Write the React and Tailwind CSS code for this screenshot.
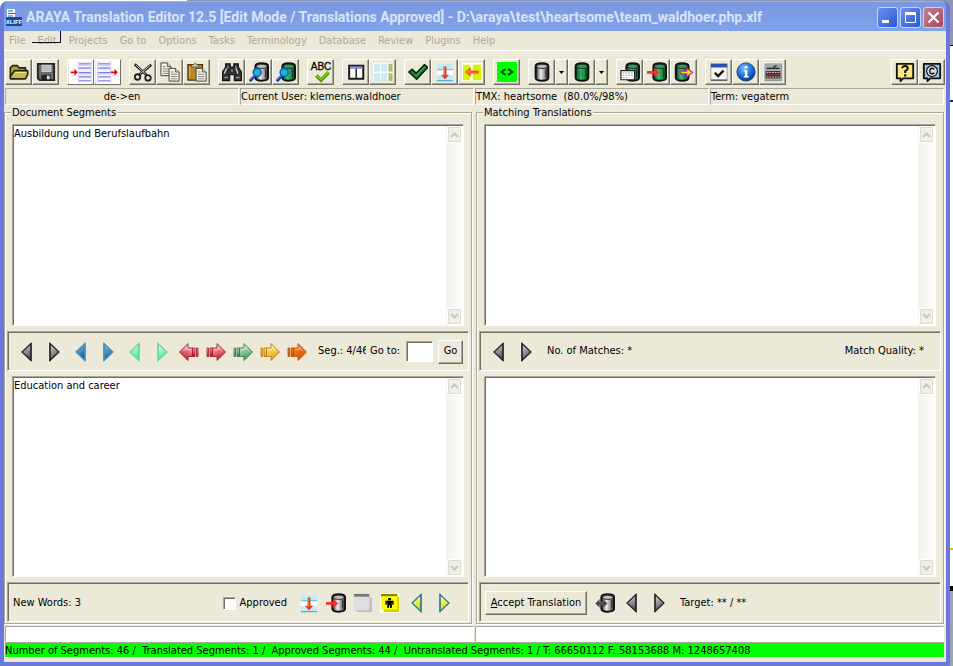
const MENUS = ['File', 'Edit', 'Projects', 'Go to', 'Options', 'Tasks', 'Terminology', 'Database', 'Review', 'Plugins', 'Help']

const SUNKEN = 'border border-t-[#aca899] border-l-[#aca899] border-b-white border-r-white'
const DEEP = 'border border-t-[#aca899] border-l-[#aca899] border-b-white border-r-white shadow-[inset_1px_1px_0_#716f64]'
const RAISED = 'border border-t-white border-l-white border-b-[#716f64] border-r-[#716f64] shadow-[inset_-1px_-1px_0_#aca899]'

function Svg({ children, size = 20 }) {
  return (
    <svg width={size} height={size} viewBox="0 0 22 22" className="shrink-0" aria-hidden="true">
      {children}
    </svg>
  )
}

function Gradients() {
  const list = [
    ['metal', '#3a3a3a', '#f0f0f0', '#484848'],
    ['leaf', '#06582a', '#3cc070', '#075c2b'],
  ]
  const down = [
    ['blue', '#8ec4e2', '#1c5f92'],
    ['mint', '#fdfdb8', '#3fee9a'],
    ['lemon', '#ffffd0', '#e0d800'],
    ['red', '#ffe0e0', '#c8182c'],
    ['green', '#eaf5e6', '#3f9a55'],
    ['gold', '#fff6c8', '#e8a400'],
    ['orange', '#f08a30', '#d85a00'],
    ['grey', '#e4e4e4', '#505050'],
  ]
  return (
    <svg width="0" height="0" className="absolute" aria-hidden="true">
      <defs>
        {list.map(([id, a, b, c]) => (
          <linearGradient key={id} id={id} x1="0" x2="1" y1="0" y2="0">
            <stop offset="0.05" stopColor={a} />
            <stop offset="0.4" stopColor={b} />
            <stop offset="0.95" stopColor={c} />
          </linearGradient>
        ))}
        {down.map(([id, a, b]) => (
          <linearGradient key={id} id={id} x1="0" x2="0.3" y1="0" y2="1">
            <stop offset="0" stopColor={a} />
            <stop offset="1" stopColor={b} />
          </linearGradient>
        ))}
        <radialGradient id="globe" cx="0.4" cy="0.3" r="0.7">
          <stop offset="0" stopColor="#7cc4ff" />
          <stop offset="0.6" stopColor="#1a6fe0" />
          <stop offset="1" stopColor="#0a3a90" />
        </radialGradient>
      </defs>
    </svg>
  )
}

function Can({ fill = 'metal', x = 0 }) {
  return (
    <g transform={`translate(${x} 0)`}>
      <path d="M4 5 Q4 1.5 11 1.5 Q18 1.5 18 5 V17 Q18 20.5 11 20.5 Q4 20.5 4 17Z" fill={`url(#${fill})`} stroke="#111" strokeWidth="2.2" />
      <ellipse cx="11" cy="4.8" rx="6" ry="2.3" fill={fill === 'leaf' ? '#2f9e5a' : '#bcbcbc'} stroke="#222" strokeWidth="1" />
      <path d="M15.5 8V17" stroke={fill === 'leaf' ? '#04451f' : '#333'} strokeWidth="1.6" />
    </g>
  )
}

function Lens() {
  return (
    <>
      <path d="M1 21 L6 15.5" stroke="#0a2a9a" strokeWidth="3" />
      <path d="M1.5 20 L6 15" stroke="#3f8cf0" strokeWidth="1.1" />
      <circle cx="9" cy="11.5" r="4.4" fill="#20b4cc" stroke="#1060c8" strokeWidth="1.7" />
    </>
  )
}

const OpenIcon = () => (
  <Svg>
    <path d="M1.5 17V6.5L4 4H9L11 6.5H18V10" fill="#b8a238" stroke="#2a2408" strokeWidth="1.8" />
    <path d="M1.5 18.5V16L6 9.5H20.5V14L18 18.5Z" fill="#cdbb4e" stroke="#2a2408" strokeWidth="1.8" strokeLinejoin="round" />
    <path d="M7 11.5H19" stroke="#f3e99c" />
  </Svg>
)
const SaveIcon = () => (
  <Svg>
    <path d="M2 2H20V20H4L2 18Z" fill="#6b6b6b" stroke="#222" strokeWidth="2" />
    <path d="M6 3H17V11H6Z" fill="#cfcfcf" />
    <path d="M7 5H16M7 7H16M7 9H16" stroke="#aaa" />
    <path d="M6 14H16V20H6Z" fill="#222" />
    <path d="M12 15H15V19H12Z" fill="#ddd" />
  </Svg>
)
function PageArrow({ right }) {
  return (
    <Svg size={24}>
      <path d="M0 0H22V22H0Z" fill="#fff" />
      <g transform={right ? 'translate(-7 0)' : undefined}>
        <path d="M8 1H21V21H8Z" fill="#f2f2ff" />
        <path d="M9 3.5H20M9 7.5H20M9 11.5H20M9 15.5H20M9 19H20" stroke="#7f7fd0" strokeWidth="1.1" />
        <path d="M9 4.7H20M9 12.7H20" stroke="#c9c9f4" />
        <path d="M8.5 1V21M20.5 1V21" stroke="#d8c8f4" strokeWidth="0.8" />
      </g>
      <path d={right ? 'M13.5 10.5H17V8L20 11.2L17 14.5V12.2H13.5Z' : 'M1.5 10.5H5V8L8 11.2L5 14.5V12.2H1.5Z'} fill="#f00000" />
    </Svg>
  )
}
const CutIcon = () => (
  <Svg>
    <path d="M2 2.5L15 14.5M20 3L7 14" stroke="#111" strokeWidth="2.8" />
    <path d="M3 3L14 13.5M19 3.5L8 13" stroke="#e8e8e8" strokeWidth="1" />
    <circle cx="5" cy="16.5" r="3" fill="none" stroke="#222" strokeWidth="2" />
    <circle cx="16.5" cy="17.5" r="3" fill="none" stroke="#222" strokeWidth="2" />
  </Svg>
)
function Sheet({ x, y }) {
  return (
    <g transform={`translate(${x} ${y})`}>
      <path d="M0 0H7L11 4V14H0Z" fill="#fbf3dc" stroke="#444" strokeWidth="1.1" />
      <path d="M7 0V4H11" fill="#ccc" stroke="#333" strokeWidth="0.8" />
      <path d="M2 4H5M2 6.5H9M2 9H9M2 11.5H9" stroke="#777" />
    </g>
  )
}
const CopyIcon = () => (
  <Svg>
    <Sheet x={1} y={1} />
    <Sheet x={10} y={7} />
  </Svg>
)
const PasteIcon = () => (
  <Svg>
    <path d="M1 3H17V20H1Z" fill="#bf8426" stroke="#4a3008" strokeWidth="1.4" />
    <path d="M3 5V18" stroke="#e8bc6a" />
    <path d="M5 5.5V3H7.5Q9 -0.5 10.5 3H13V5.5Z" fill="#d8d8a0" stroke="#555" />
    <Sheet x={10} y={7} />
  </Svg>
)
const FindIcon = () => (
  <Svg>
    <path d="M4 2H9V5.5H13V2H18V5.5L21.5 11V20.5H13.5V14H8.5V20.5H0.5V11L4 5.5Z" fill="#303030" stroke="#111" strokeWidth="1.2" />
    <path d="M5 7L2.5 13M15.5 7L17.5 13" stroke="#c8c8c8" strokeWidth="1.6" />
    <path d="M6.5 4V7M15.5 4V7" stroke="#999" strokeWidth="1.4" />
    <path d="M2.5 17H6.5M15.5 17H19.5M10 9.5H12" stroke="#999" strokeWidth="1.8" />
  </Svg>
)
const SearchIcon = ({ fill }) => (
  <Svg>
    <Can fill={fill} x={3} />
    <Lens />
  </Svg>
)
const SpellIcon = () => (
  <Svg size={22}>
    <text x="11" y="9" textAnchor="middle" fontFamily="Liberation Sans" fontSize="10" fill="#000" stroke="#000" strokeWidth="0.3">ABC</text>
    <path d="M6.5 14.5L11 19L18.5 11.5" fill="none" stroke="#3c7a00" strokeWidth="3.4" />
    <path d="M6.5 14L11 18.5L18.5 11" fill="none" stroke="#76d010" strokeWidth="2.2" />
  </Svg>
)
const ColumnsIcon = () => (
  <Svg>
    <path d="M3.5 4H19V18.5H3.5Z" fill="#fff" stroke="#1a1a1a" strokeWidth="2.2" />
    <path d="M4.5 5H18V7.5H4.5Z" fill="#7d8cf0" />
    <path d="M11.2 7.5V18" stroke="#1a1a1a" strokeWidth="1.6" />
  </Svg>
)
const GridIcon = () => (
  <Svg>
    <path d="M0 1H22V21H0Z" fill="#fff" />
    <path d="M1 2H8V10.5H1ZM9 2H15.5V10.5H9ZM1 12.5H8V21H1ZM9 12.5H15.5V21H9Z" fill="#c9ecf2" />
    <path d="M17 2H21.5V10.5H17ZM17 12.5H21.5V21H17Z" fill="#b3bb68" />
  </Svg>
)
const CheckIcon = () => (
  <Svg>
    <path d="M1 11L4.5 8L9 12.5L18 3L21.5 6L9.5 19Z" fill="#188a3a" stroke="#06200c" strokeWidth="1.8" strokeLinejoin="round" />
    <path d="M9 14.5L18.5 5" stroke="#45c06a" />
  </Svg>
)
const SplitIcon = () => (
  <Svg>
    <path d="M2 2H20V21H2Z" fill="#fff" />
    <path d="M2 2H20V8H2ZM2 14.5H20V20.5H2Z" fill="#c5e8f4" />
    <path d="M2 8.5H20M2 20.5H20" stroke="#47b4dd" strokeWidth="1.2" />
    <path d="M9.5 5H12.5V14H15.5L11 19L6.5 14H9.5Z" fill="#e8302c" />
    <path d="M10 6V15" stroke="#f5a040" strokeWidth="1.2" />
  </Svg>
)
const MergeIcon = () => (
  <Svg>
    <path d="M0 1H22V21H0Z" fill="#fff" />
    <path d="M1 3H9V20H1ZM12 3H21V20H12Z" fill="#d9f20a" />
    <path d="M9 3H12V20H9Z" fill="#fbffb0" />
    <path d="M18 10V12.2H9V15.5L4 11L9 6.5V10Z" fill="#f08a10" stroke="#e03020" strokeWidth="0.9" />
  </Svg>
)
const TagIcon = () => (
  <Svg size={22}>
    <path d="M1 1H21V21H1Z" fill="#00ff00" />
    <path d="M9.8 8L5.5 11L9.8 14M12.2 8L16.5 11L12.2 14" fill="none" stroke="#073a07" strokeWidth="1.8" />
  </Svg>
)
const PlainCan = ({ fill }) => (
  <Svg>
    <Can fill={fill} />
    {fill === 'leaf' && <path d="M8 9V17M11 9V18" stroke="#0c7a3a" />}
  </Svg>
)
const CanForm = () => (
  <Svg>
    <Can fill="leaf" x={3} />
    <path d="M1 9.5H16V19.5H1Z" fill="#fff" stroke="#222" strokeWidth="1.3" />
    <path d="M3 12H14M3 14.5H14M3 17H9" stroke="#999" strokeDasharray="2 1" />
  </Svg>
)
const CanIn = ({ fill }) => (
  <Svg>
    <Can fill={fill} x={3} />
    <path d="M0 10H7.5V6.5L13.5 11.5L7.5 16.5V13H0Z" fill="#f03030" />
  </Svg>
)
const CanOut = () => (
  <Svg>
    <Can fill="leaf" x={-2} />
    <path d="M7.5 10H14V6.5L20.5 11.5L14 16.5V13H7.5Z" fill="#f5e800" stroke="#c020c0" strokeWidth="1.3" />
  </Svg>
)
const OptionsIcon = () => (
  <Svg>
    <path d="M2 2H20V20H2Z" fill="#f4f4f4" stroke="#a0a0a0" />
    <path d="M2 2H20V6H2Z" fill="#2c4fb0" />
    <path d="M2 20H20" stroke="#555" strokeWidth="1.5" />
    <path d="M6.5 12L10 15.5L16 9.5" fill="none" stroke="#111" strokeWidth="2.6" />
  </Svg>
)
const InfoIcon = () => (
  <Svg>
    <circle cx="11" cy="11" r="10" fill="url(#globe)" stroke="#16407c" />
    <path d="M9.5 4.5H12.5V7H9.5ZM8.5 9H12.5V15.5H14V17H8.5V15.5H9.8V10.5H8.5Z" fill="#fff" />
  </Svg>
)
const KeyboardIcon = () => (
  <Svg>
    <path d="M1.5 1.5H20.5V20.5H1.5Z" fill="#a8a8a8" stroke="#888" />
    <path d="M1 1V21M1 1H21" stroke="#fff" />
    <path d="M4 7H18M12 7V5L15 4" fill="none" stroke="#222" strokeWidth="1.2" />
    <path d="M3 10H19V18H3Z" fill="#333" />
    <path d="M4 11.5H18M4 16.5H18" stroke="#ddd" strokeDasharray="2 1" />
    <path d="M4 14H18" stroke="#d03030" strokeWidth="1.4" strokeDasharray="2 1" />
  </Svg>
)
function Bubble({ fill, children }) {
  return (
    <Svg>
      <path d="M2 2H20V18H9L6 21V18H2Z" fill={fill} stroke="#111" strokeWidth="2" strokeLinejoin="round" />
      {children}
    </Svg>
  )
}
const HelpIcon = () => (
  <Bubble fill="#ffe680">
    <path d="M8 7Q8 4.5 11 4.5Q14 4.5 14 7Q14 9 11.2 10.2V12" fill="none" stroke="#111" strokeWidth="2.2" />
    <path d="M10 13.5H12.4V16H10Z" fill="#111" />
  </Bubble>
)
const CopyrightIcon = () => (
  <Bubble fill="#a4c4dc">
    <circle cx="11" cy="10" r="6" fill="#d0dde6" stroke="#111" strokeWidth="1.3" />
    <path d="M13.5 8Q11 6 9 8Q7.8 10 9 12Q11 14 13.5 12" fill="none" stroke="#111" strokeWidth="1.6" />
  </Bubble>
)

function Triangle({ fill, stroke, left }) {
  return (
    <Svg size={22}>
      <path d={left ? 'M15 2.5V19.5L6 11Z' : 'M7 2.5V19.5L16 11Z'} fill={`url(#${fill})`} stroke={stroke} strokeWidth="1.2" />
      <path d={left ? 'M15 2V20' : 'M7 2V20'} stroke={stroke} strokeWidth="1.2" />
    </Svg>
  )
}
function BlockArrow({ fill, stroke, left }) {
  return (
    <Svg size={22}>
      <g transform={left ? 'translate(22 0) scale(-1 1)' : undefined} fill={`url(#${fill})`} stroke={stroke} strokeWidth="0.8">
        <path d="M2 7H3.5V15.5H2ZM5 7H7.5V15.5H5Z" />
        <path d="M7.5 7H12V2.5L20.5 11L12 19.5V15.5H7.5Z" />
        <path d="M9 8.5H13V6L17 10" fill="none" stroke="#fff" strokeOpacity="0.6" />
      </g>
    </Svg>
  )
}
const BlankIcon = () => (
  <Svg>
    <path d="M4 5H21V21H4Z" fill="#c0c0c4" />
    <path d="M1 3H18V19H1Z" fill="#dedee0" />
    <path d="M1 1H18V4H1Z" fill="#777" />
  </Svg>
)
const PersonIcon = () => (
  <Svg>
    <path d="M0 0H22V22H0Z" fill="#fff" />
    <path d="M4 4H21V21H4Z" fill="#d8d000" />
    <path d="M1 3H19V18H1Z" fill="#ffff00" />
    <path d="M1 1H19V3.5H1Z" fill="#8a8600" />
    <path d="M9 5.5H12V8H9ZM6 8.5H15V13H13.5V10.5H13V16.5H11V13.5H10V16.5H8V10.5H7.5V13H6Z" fill="#000" />
  </Svg>
)
const CanBoth = () => (
  <Svg>
    <Can fill="metal" x={3} />
    <path d="M0.5 11.5L5 7V10H9V7L13.5 11.5L9 16V13H5V16Z" fill="#4a4a4a" stroke="#777" strokeWidth="0.5" />
  </Svg>
)

function Tool({ label, children }) {
  return (
    <button type="button" aria-label={label} className={`flex h-[26px] w-[27px] items-center justify-center ${RAISED}`}>
      {children}
    </button>
  )
}

function Drop({ label }) {
  return (
    <button type="button" aria-label={label} className={`flex h-[26px] w-[13px] items-center justify-center ${RAISED}`}>
      <svg width="5" height="3" viewBox="0 0 5 3" aria-hidden="true">
        <path d="M0 0H5L2.5 3Z" fill="#000" />
      </svg>
    </button>
  )
}

function FlatButton({ label, children }) {
  return (
    <button type="button" aria-label={label} className="flex w-[27px] items-center justify-center">
      {children}
    </button>
  )
}

function ScrollButton({ up }) {
  return (
    <button
      type="button"
      aria-label={up ? 'Scroll up' : 'Scroll down'}
      className="flex h-[17px] items-center justify-center rounded-xs border border-white bg-[#f1f0e8] shadow-[inset_0_0_0_1px_#dddcd0]"
    >
      <svg width="9" height="6" viewBox="0 0 9 6" aria-hidden="true">
        <path d={up ? 'M1 5L4.5 1.5L8 5' : 'M1 1L4.5 4.5L8 1'} fill="none" stroke="#c9c7ba" strokeWidth="2" />
      </svg>
    </button>
  )
}

function TextPane({ label, value = '' }) {
  return (
    <div className={`mx-[5px] flex min-h-0 flex-1 bg-white pt-px pl-px ${DEEP}`}>
      <textarea
        aria-label={label}
        defaultValue={value}
        className="min-w-0 flex-1 resize-none overflow-hidden pt-px leading-[14px] outline-none"
      />
      <div className="flex w-[17px] flex-col justify-between bg-linear-to-r from-[#f3f1ec] to-[#fefefb] px-px">
        <ScrollButton up />
        <ScrollButton />
      </div>
    </div>
  )
}

function Bar({ children }) {
  return <div className={`flex h-10 shrink-0 items-center pt-[2px] pl-px ${DEEP}`}>{children}</div>
}

function Group({ title, children }) {
  return (
    <fieldset className="flex min-w-0 flex-1 flex-col gap-[5px] border border-[#aca899] px-[2px] pt-1 pb-px shadow-[1px_1px_0_#fff,inset_1px_1px_0_#fff]">
      <legend className="ml-1 bg-[#ece9d8] px-px pt-px leading-[14px]">{title}</legend>
      {children}
    </fieldset>
  )
}

function TitleBar() {
  const btn = 'flex size-[21px] items-center justify-center rounded-[3px] border border-[#c5d3f8]'
  return (
    <header className="flex h-[30px] shrink-0 items-center gap-1 pt-[3px] pr-[2px] pl-[2px]">
      <svg width="16" height="17" viewBox="0 0 16 17" className="shrink-0" aria-hidden="true">
        <path d="M1 0H9V9H1Z" fill="#fff" />
        <path d="M2 2H7M2 4.5H9M2 7H7" stroke="#1a5fb0" />
        <path d="M0 8H16V17H0Z" fill="#0b4fa8" />
        <text x="8" y="15" textAnchor="middle" fontFamily="Liberation Sans" fontWeight="bold" fontSize="6" fill="#fff">XLIFF</text>
      </svg>
      <h1 className="flex-1 truncate font-['Roboto',sans-serif] text-[14px] font-bold text-[#d8e4f8]">
        ARAYA Translation Editor 12.5 [Edit Mode / Translations Approved] - D:\araya\test\heartsome\team_waldhoer.php.xlf
      </h1>
      <div className="flex gap-[2px]">
        <button type="button" aria-label="Minimize" className={`${btn} bg-linear-to-br from-[#6c92f0] to-[#2a55d4]`}>
          <svg width="13" height="13" viewBox="0 0 13 13"><path d="M1 9H8V12H1Z" fill="#fff" /></svg>
        </button>
        <button type="button" aria-label="Maximize" className={`${btn} bg-linear-to-br from-[#6c92f0] to-[#2a55d4]`}>
          <svg width="13" height="13" viewBox="0 0 13 13"><path d="M1.5 2.5H11.5V11.5H1.5Z" fill="none" stroke="#fff" /><path d="M1 1H12V4H1Z" fill="#fff" /></svg>
        </button>
        <button type="button" aria-label="Close" className={`${btn} bg-linear-to-br from-[#c08098] to-[#a84858]`}>
          <svg width="13" height="13" viewBox="0 0 13 13"><path d="M1.5 1.5L11.5 11.5M11.5 1.5L1.5 11.5" stroke="#fff" strokeWidth="2.2" /></svg>
        </button>
      </div>
    </header>
  )
}

function Toolbar() {
  return (
    <div className="flex shrink-0 gap-2 px-px pt-2 pb-[3px]">
      <div className="flex">
        <Tool label="Open"><OpenIcon /></Tool>
        <Tool label="Save"><SaveIcon /></Tool>
      </div>
      <div className="flex">
        <Tool label="Import"><PageArrow /></Tool>
        <Tool label="Export"><PageArrow right /></Tool>
      </div>
      <div className="flex">
        <Tool label="Cut"><CutIcon /></Tool>
        <Tool label="Copy"><CopyIcon /></Tool>
        <Tool label="Paste"><PasteIcon /></Tool>
      </div>
      <div className="flex">
        <Tool label="Find"><FindIcon /></Tool>
        <Tool label="Search memory"><SearchIcon fill="metal" /></Tool>
        <Tool label="Search terms"><SearchIcon fill="leaf" /></Tool>
      </div>
      <Tool label="Spelling"><SpellIcon /></Tool>
      <div className="flex">
        <Tool label="Columns"><ColumnsIcon /></Tool>
        <Tool label="Grid"><GridIcon /></Tool>
      </div>
      <div className="flex">
        <Tool label="Approve"><CheckIcon /></Tool>
        <Tool label="Split segment"><SplitIcon /></Tool>
        <Tool label="Merge segment"><MergeIcon /></Tool>
      </div>
      <Tool label="Tags"><TagIcon /></Tool>
      <div className="flex">
        <Tool label="Memory"><PlainCan fill="metal" /></Tool>
        <Drop label="Memory list" />
        <Tool label="Terms"><PlainCan fill="leaf" /></Tool>
        <Drop label="Terms list" />
      </div>
      <div className="flex">
        <Tool label="Edit term"><CanForm /></Tool>
        <Tool label="Add term"><CanIn fill="leaf" /></Tool>
        <Tool label="Export terms"><CanOut /></Tool>
      </div>
      <div className="flex">
        <Tool label="Preferences"><OptionsIcon /></Tool>
        <Tool label="Information"><InfoIcon /></Tool>
        <Tool label="Keyboard"><KeyboardIcon /></Tool>
      </div>
      <div className="ml-auto flex">
        <Tool label="Help"><HelpIcon /></Tool>
        <Tool label="Copyright"><CopyrightIcon /></Tool>
      </div>
    </div>
  )
}

// slivers of the desktop that show round the window
function Desktop() {
  return (
    <>
      <div className="absolute inset-x-0 top-0 flex h-3" aria-hidden="true">
        <div className="w-[187px] bg-white" />
        <div className="flex-1 bg-[#8d97b4]" />
      </div>
      <div className="absolute inset-y-0 right-0 flex w-3 flex-col" aria-hidden="true">
        <div className="h-[45px] bg-[#8d97b4]" />
        <div className="h-[55px] border-t border-black bg-white" />
        <div className="h-[448px] border-t-2 border-[#1c1ca0] bg-white" />
        <div className="h-[38px] border-t-2 border-[#f5b800] bg-white" />
        <div className="h-[5px] bg-black" />
        <div className="flex-1 bg-[#9aa3ba]" />
      </div>
    </>
  )
}

export default function App() {
  return (
    <div className="relative flex min-h-screen pt-px pr-[3px] font-['DejaVu_Sans_Condensed','DejaVu_Sans',sans-serif] text-[11px] text-black">
      <Gradients />
      <Desktop />
      <div className="relative flex min-w-0 flex-1 flex-col rounded-t-lg border-x-4 border-b-4 border-[#6a78dc] bg-linear-to-b from-[#7a97e0] to-[#7fa3ea] bg-[length:100%_30px] shadow-[inset_0_1px_0_#9ab4f0]">
        <TitleBar />
        <div className="flex flex-1 flex-col bg-[#ece9d8]">
          <nav className="relative flex h-5 shrink-0 items-center gap-3 border-b border-white pt-px pl-[5px] text-[#aca899]">
            {MENUS.map((m) => (
              <button key={m} type="button">
                {m}
              </button>
            ))}
            <span className="pointer-events-none absolute top-0 left-7 h-3 w-[29px] border-r border-b border-[#111122]" />
          </nav>
          <Toolbar />
          <div className="grid h-[15px] shrink-0 grid-cols-4 gap-px pr-[2px] pl-px leading-[15px] whitespace-pre">
            <div className={`${SUNKEN} text-center`}>de-&gt;en</div>
            <div className={SUNKEN}>Current User: klemens.waldhoer</div>
            <div className={SUNKEN}>{'TMX: heartsome  (80.0%/98%)'}</div>
            <div className={SUNKEN}>Term: vegaterm</div>
          </div>

          <main className="mt-[2px] flex min-h-0 flex-1 gap-1 pr-[2px]">
            <Group title="Document Segments">
              <TextPane label="Source segment" value="Ausbildung und Berufslaufbahn" />
              <Bar>
                <div className="ml-1 flex shrink-0">
                  <FlatButton label="Previous"><Triangle fill="grey" stroke="#222" left /></FlatButton>
                  <FlatButton label="Next"><Triangle fill="grey" stroke="#222" /></FlatButton>
                  <FlatButton label="Previous open"><Triangle fill="blue" stroke="#3f8fbe" left /></FlatButton>
                  <FlatButton label="Next open"><Triangle fill="blue" stroke="#3f8fbe" /></FlatButton>
                  <FlatButton label="Previous approved"><Triangle fill="mint" stroke="#5fd9a8" left /></FlatButton>
                  <FlatButton label="Next approved"><Triangle fill="mint" stroke="#5fd9a8" /></FlatButton>
                  <FlatButton label="Previous untranslated"><BlockArrow fill="red" stroke="#a01020" left /></FlatButton>
                  <FlatButton label="Next untranslated"><BlockArrow fill="red" stroke="#a01020" /></FlatButton>
                  <FlatButton label="Next translated"><BlockArrow fill="green" stroke="#2f7044" /></FlatButton>
                  <FlatButton label="Next fuzzy"><BlockArrow fill="gold" stroke="#b07400" /></FlatButton>
                  <FlatButton label="Next note"><BlockArrow fill="orange" stroke="#b84c00" /></FlatButton>
                </div>
                <span className="ml-2 w-12 shrink-0 overflow-hidden whitespace-nowrap">Seg.: 4/46</span>
                <label htmlFor="goto" className="ml-1 shrink-0 whitespace-nowrap">Go to:</label>
                <input id="goto" className={`ml-auto h-[21px] w-[27px] shrink-0 bg-white px-px outline-none ${DEEP}`} />
                <button type="button" className={`mr-[5px] ml-[5px] h-6 w-[25px] shrink-0 ${RAISED}`}>
                  Go
                </button>
              </Bar>
              <TextPane label="Target segment" value="Education and career" />
              <Bar>
                <span className="ml-1">New Words: 3</span>
                <label className="ml-auto flex items-center gap-1">
                  <input type="checkbox" className={`size-[13px] appearance-none bg-white ${DEEP}`} />
                  Approved
                </label>
                <div className="mr-[11px] ml-2 flex shrink-0">
                  <FlatButton label="Split"><SplitIcon /></FlatButton>
                  <FlatButton label="Store"><CanIn fill="metal" /></FlatButton>
                  <FlatButton label="Note"><BlankIcon /></FlatButton>
                  <FlatButton label="Person"><PersonIcon /></FlatButton>
                  <FlatButton label="Previous match"><Triangle fill="lemon" stroke="#2a7a90" left /></FlatButton>
                  <FlatButton label="Next match"><Triangle fill="lemon" stroke="#2a7a90" /></FlatButton>
                </div>
              </Bar>
            </Group>

            <Group title="Matching Translations">
              <TextPane label="Match source" />
              <Bar>
                <div className="ml-1 flex">
                  <FlatButton label="Previous match"><Triangle fill="grey" stroke="#222" left /></FlatButton>
                  <FlatButton label="Next match"><Triangle fill="grey" stroke="#222" /></FlatButton>
                </div>
                <span className="ml-2">No. of Matches: *</span>
                <span className="mr-4 ml-auto">Match Quality: *</span>
              </Bar>
              <TextPane label="Match target" />
              <Bar>
                <button type="button" className={`ml-1 h-6 w-[102px] whitespace-nowrap ${RAISED}`}>
                  <span className="underline">A</span>ccept Translation
                </button>
                <div className="ml-1 flex">
                  <FlatButton label="Exchange"><CanBoth /></FlatButton>
                  <FlatButton label="Previous"><Triangle fill="grey" stroke="#222" left /></FlatButton>
                  <FlatButton label="Next"><Triangle fill="grey" stroke="#222" /></FlatButton>
                </div>
                <span className="ml-2">Target: ** / **</span>
              </Bar>
            </Group>
          </main>

          <div className="mt-[2px] grid shrink-0 grid-cols-2 gap-px pr-[2px] pl-px">
            <div className={`${SUNKEN} h-4 bg-white`} />
            <div className={`${SUNKEN} h-4 bg-white`} />
          </div>
          <footer className="mr-[2px] mb-1 ml-px shrink-0 border-t border-b border-t-[#aca899] border-b-white bg-[#00ff00] pt-px leading-[13px] whitespace-pre">
            {'Number of Segments: 46 /  Translated Segments: 1 /  Approved Segments: 44 /  Untranslated Segments: 1 / T: 66650112 F: 58153688 M: 1248657408'}
          </footer>
        </div>
      </div>
    </div>
  )
}
